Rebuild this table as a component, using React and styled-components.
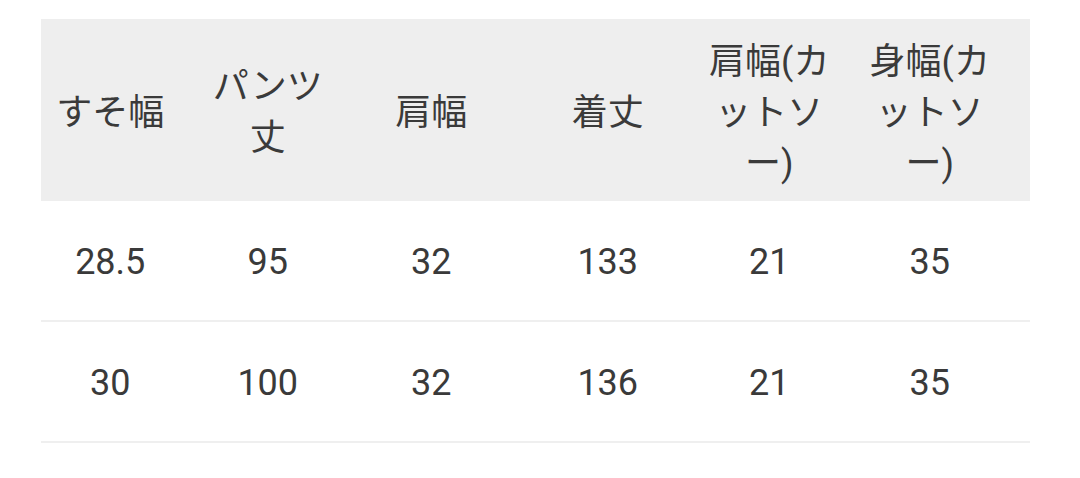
import React from "react";
import styled, { createGlobalStyle } from "styled-components";

const Global = createGlobalStyle`
  html, body { margin: 0; padding: 0; background: #ffffff; }
  body {
    font-family: Roboto, "Noto Sans CJK JP", "Noto Sans", sans-serif;
    color: #383838;
  }
`;

const Page = styled.div`
  width: 1080px;
  height: 478px;
  padding: 19px 0 0 41px;
  box-sizing: border-box;
`;

const Table = styled.div`
  width: 989px;
  display: flex;
  flex-direction: column;
`;

const Row = styled.div`
  display: grid;
  grid-template-columns: 138.5px 176.5px 150.5px 202.5px 120.5px 200.5px;
  align-items: center;
  height: ${(p) => (p.$head ? "182px" : "121px")};
  background: ${(p) => (p.$head ? "#eeeeee" : "transparent")};
  border-bottom: ${(p) => (p.$head ? "none" : "2px solid #efefef")};
  box-sizing: border-box;
`;

const Cell = styled.div`
  display: flex;
  justify-content: center;
  align-items: center;
  text-align: center;
  font-size: 36px;
  font-weight: 400;
  line-height: ${(p) => (p.$head ? "51px" : "44px")};
  padding-top: ${(p) => (p.$head ? "6px" : "3px")};
  white-space: nowrap;
  color: #3a3a3a;
`;

const headers = [
  ["すそ幅"],
  ["パンツ", "丈"],
  ["肩幅"],
  ["着丈"],
  ["肩幅(カ", "ットソ", "ー)"],
  ["身幅(カ", "ットソ", "ー)"],
];

const rows = [
  ["28.5", "95", "32", "133", "21", "35"],
  ["30", "100", "32", "136", "21", "35"],
];

export default function App() {
  return (
    <>
      <Global />
      <Page>
        <Table>
          <Row $head>
            {headers.map((lines, i) => (
              <Cell $head key={i}>
                <span>
                  {lines.map((l, j) => (
                    <React.Fragment key={j}>
                      {j > 0 && <br />}
                      {l}
                    </React.Fragment>
                  ))}
                </span>
              </Cell>
            ))}
          </Row>
          {rows.map((r, i) => (
            <Row key={i}>
              {r.map((v, j) => (
                <Cell key={j}>{v}</Cell>
              ))}
            </Row>
          ))}
        </Table>
      </Page>
    </>
  );
}
